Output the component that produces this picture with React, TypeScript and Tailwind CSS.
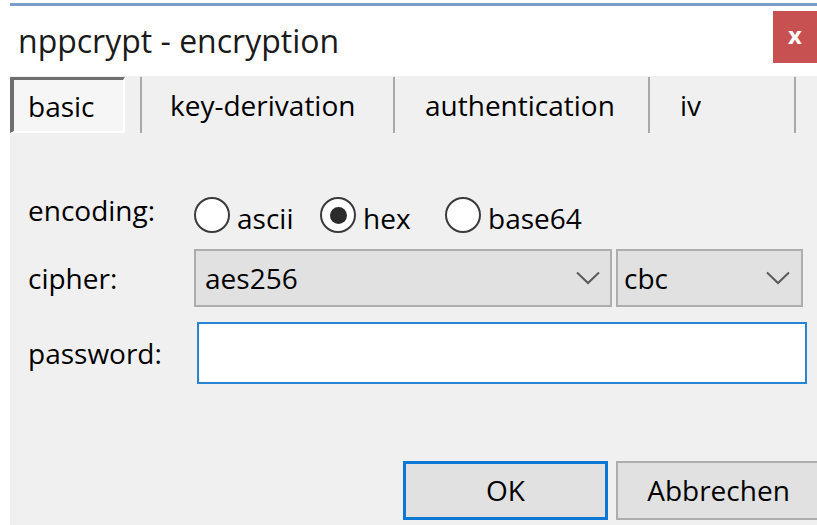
import React, { useState } from "react";

const tabs = [
  { label: "key-derivation", width: "w-[251px]", pad: "pl-[28px]" },
  { label: "authentication", width: "w-[253px]", pad: "pl-[30px]" },
  { label: "iv", width: "w-[144px]", pad: "pl-[30px]" },
];

const Chevron = () => (
  <svg width="24" height="14" viewBox="0 0 24 14" className="shrink-0">
    <polyline points="1,1.5 12,12 23,1.5" fill="none" stroke="#5a5a5a" strokeWidth="2" />
  </svg>
);

const Radio = ({
  label,
  checked,
  width,
  onSelect,
}: {
  label: string;
  checked: boolean;
  width: string;
  onSelect: () => void;
}) => (
  <button type="button" onClick={onSelect} className={`flex items-center gap-[7px] ${width}`}>
    <span className="flex h-[36px] w-[36px] shrink-0 items-center justify-center rounded-full border-[2px] border-[#3a3a3a] bg-white">
      {checked && <span className="h-[17px] w-[17px] rounded-full bg-[#2b2b2b]" />}
    </span>
    <span className="pt-[6px] text-[28px] leading-none">{label}</span>
  </button>
);

export default function App() {
  const [encoding, setEncoding] = useState("hex");
  const [password, setPassword] = useState("");

  return (
    <div
      className="h-[525px] w-[817px] overflow-hidden bg-white pl-[10px] pt-[3px] text-black"
      style={{ fontFamily: '"Open Sans", "Noto Sans", sans-serif' }}
    >
      <div className="flex h-full flex-col border-t-[3px] border-[#7b9dc9]">
        {/* title bar */}
        <div className="flex h-[70px] shrink-0 items-start justify-between bg-white">
          <span className="pl-[8px] pt-[19px] text-[32px] leading-none text-[#1a1a1a]">
            nppcrypt - encryption
          </span>
          <div className="mt-[5px] flex h-[52px] w-[44px] items-center justify-center bg-[#c75050] pb-[4px] text-[24px] font-bold leading-none text-white">
            x
          </div>
        </div>

        {/* tab strip */}
        <div className="flex h-[58px] shrink-0 bg-[#f0f0f0] text-[28px] leading-none">
          <div className="w-[130px]">
            <div className="mt-[1px] flex h-[56px] w-[115px] items-center border-b-[2px] border-l-[4px] border-r-[2px] border-t-[3px] border-b-white border-l-[#6f6f6f] border-r-white border-t-[#6f6f6f] bg-[#f6f6f6] pl-[14px]">
              basic
            </div>
          </div>
          <div className="mt-[1px] h-[56px] w-[2px] bg-[#a8a8a8]" />
          {tabs.map((t) => (
            <React.Fragment key={t.label}>
              <div className={`flex items-center ${t.width} ${t.pad}`}>{t.label}</div>
              <div className="mt-[1px] h-[56px] w-[2px] bg-[#a8a8a8]" />
            </React.Fragment>
          ))}
        </div>

        {/* basic page */}
        <div className="flex-1 bg-[#f0f0f0] pl-[18px] pt-[61px] text-[28px] leading-none">
          <div className="flex h-[40px] items-center">
            <span className="w-[166px] pb-[10px]">encoding:</span>
            <Radio label="ascii" width="w-[126px]" checked={encoding === "ascii"} onSelect={() => setEncoding("ascii")} />
            <Radio label="hex" width="w-[125px]" checked={encoding === "hex"} onSelect={() => setEncoding("hex")} />
            <Radio label="base64" width="w-[150px]" checked={encoding === "base64"} onSelect={() => setEncoding("base64")} />
          </div>

          <div className="mt-[14px] flex h-[58px] items-center">
            <span className="w-[166px]">cipher:</span>
            <div className="flex h-full w-[418px] items-center justify-between border-[2px] border-[#adadad] bg-[#e1e1e1] pl-[9px] pr-[10px]">
              <span>aes256</span>
              <Chevron />
            </div>
            <div className="ml-[4px] flex h-full w-[187px] items-center justify-between border-[2px] border-[#adadad] bg-[#e1e1e1] pl-[6px] pr-[11px]">
              <span>cbc</span>
              <Chevron />
            </div>
          </div>

          <div className="mt-[15px] flex h-[62px] items-center">
            <span className="w-[169px]">password:</span>
            <input
              type="password"
              value={password}
              onChange={(e) => setPassword(e.target.value)}
              className="h-full w-[610px] border-[2px] border-[#2a84d6] bg-white px-[6px] outline-none"
            />
          </div>

          <div className="mt-[77px] flex h-[59px] gap-[8px] pl-[375px]">
            <button
              type="button"
              className="w-[205px] shrink-0 border-[3px] border-[#0a78d4] bg-[#e1e1e1] pb-[2px]"
            >
              OK
            </button>
            <button
              type="button"
              className="w-[205px] shrink-0 border-[2px] border-[#adadad] bg-[#e1e1e1] pb-[2px]"
            >
              Abbrechen
            </button>
          </div>
        </div>
      </div>
    </div>
  );
}
